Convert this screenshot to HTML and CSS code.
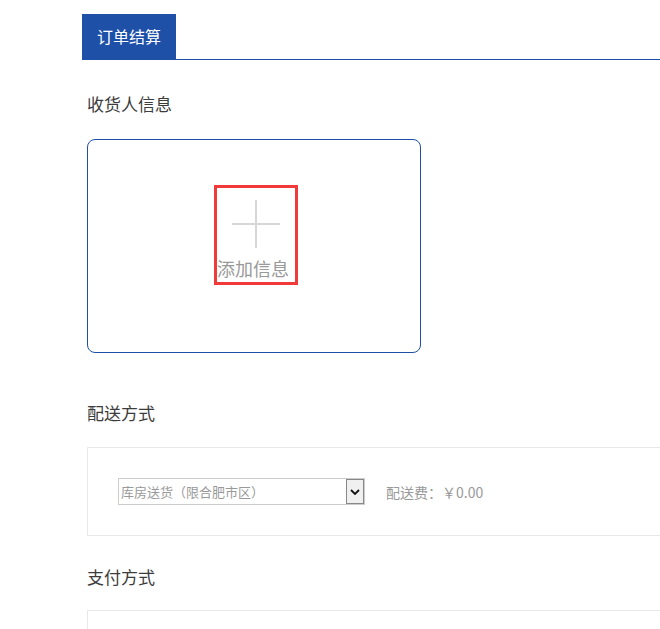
FILE: index.html
```html
<!DOCTYPE html>
<html lang="zh-CN">
<head>
    <meta charset="UTF-8">
    <title>订单结算</title>
    <link rel="stylesheet" href="styles.css">
</head>
<body>
    <div class="page">
        <div class="tab-bar">
            <span class="tab">订单结算</span>
        </div>

        <div class="section">
            <h3 class="section-title">收货人信息</h3>
            <div class="address-card">
                <div class="add-box">
                    <svg class="plus" width="48" height="48" viewBox="0 0 48 48">
                        <line x1="24" y1="0" x2="24" y2="48" stroke="#d6d6d6" stroke-width="2"/>
                        <line x1="0" y1="24" x2="48" y2="24" stroke="#d6d6d6" stroke-width="2"/>
                    </svg>
                    <span class="add-text">添加信息</span>
                </div>
            </div>
        </div>

        <div class="section">
            <h3 class="section-title gap-lg">配送方式</h3>
            <div class="panel">
                <div class="fake-select">
                    <span class="select-text">库房送货（限合肥市区）</span>
                    <span class="select-arrow">
                        <svg width="10" height="6" viewBox="0 0 10 6">
                            <polyline points="1,1 5,5 9,1" fill="none" stroke="#111" stroke-width="1.8"/>
                        </svg>
                    </span>
                </div>
                <span class="fee">配送费：￥0.00</span>
            </div>
        </div>

        <div class="section">
            <h3 class="section-title gap-md">支付方式</h3>
            <div class="panel empty"></div>
        </div>
    </div>
</body>
</html>
```

FILE: styles.css
```css
body {
    margin: 0;
    font-family: "Noto Sans CJK SC", "Noto Sans", sans-serif;
    color: #333;
    background: #fff;
    overflow: hidden;
}
.page {
    width: 1100px;
    padding: 14px 0 0 82px;
}
.tab-bar {
    display: flex;
    border-bottom: 1px solid #1e50a8;
}
.tab {
    background: #1e50a8;
    color: #fff;
    font-size: 16px;
    line-height: 45px;
    padding: 0 15px;
    width: 64px;
}
.section {
    padding-left: 5px;
}
.section-title {
    margin: 32px 0 23px;
    font-size: 17px;
    font-weight: normal;
    line-height: 24px;
    color: #3c3c3c;
}
.section-title.gap-lg {
    margin-top: 48px;
    margin-bottom: 22px;
}
.section-title.gap-md {
    margin-top: 29px;
    margin-bottom: 21px;
}
.address-card {
    width: 328px;
    height: 212px;
    border: 1px solid #1e50a8;
    border-radius: 8px;
    display: flex;
    justify-content: center;
    align-items: flex-start;
    padding-left: 4px;
}
.add-box {
    margin-top: 45px;
    width: 78px;
    height: 94px;
    border: 3px solid #f33a3a;
    display: flex;
    flex-direction: column;
    align-items: center;
}
.plus {
    margin-top: 12px;
    display: block;
}
.add-text {
    align-self: flex-start;
    font-size: 18px;
    line-height: 22px;
    color: #999;
    margin-top: 9px;
    white-space: nowrap;
}
.panel {
    border: 1px solid #e8e8e8;
    height: 87px;
    padding-left: 30px;
    display: flex;
    align-items: center;
    gap: 21px;
}
.fake-select {
    width: 245px;
    height: 25px;
    border: 1px solid #ccc;
    display: flex;
    align-items: center;
    justify-content: space-between;
}
.select-text {
    font-size: 13px;
    color: #999;
    padding-left: 2px;
    white-space: nowrap;
}
.select-arrow {
    width: 16px;
    height: 23px;
    border: 1px solid #888;
    background: #f0f0f0;
    display: flex;
    align-items: center;
    justify-content: center;
}
.fee {
    font-size: 14px;
    color: #999;
}
```
